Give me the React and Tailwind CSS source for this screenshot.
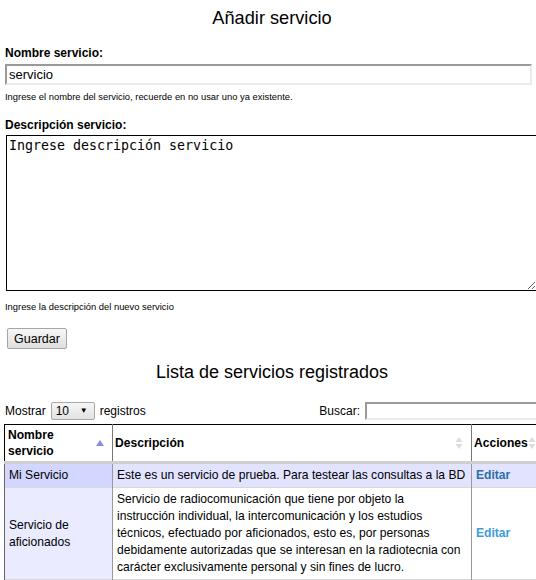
import React from "react"

const SortAsc = () => (
    <svg width="8" height="8" viewBox="0 0 8 8" className="shrink-0">
        <path d="M4 1 L8 7 L0 7 Z" fill="#8a8ae0" />
    </svg>
)

const SortBoth = () => (
    <svg width="8" height="14" viewBox="0 0 8 14" className="shrink-0">
        <path d="M4 1 L7.5 6 L0.5 6 Z" fill="#dcdcdc" />
        <path d="M4 13 L7.5 8 L0.5 8 Z" fill="#dcdcdc" />
    </svg>
)

const rows = [
    {
        name: "Mi Servicio",
        desc: ["Este es un servicio de prueba. Para testear las consultas a la BD"],
    },
    {
        name: "Servicio de aficionados",
        desc: [
            "Servicio de radiocomunicación que tiene por objeto la",
            "instrucción individual, la intercomunicación y los estudios",
            "técnicos, efectuado por aficionados, esto es, por personas",
            "debidamente autorizadas que se interesan en la radiotecnia con",
            "carácter exclusivamente personal y sin fines de lucro.",
        ],
    },
]

export default function App() {
    return (
        <div className="w-[536px] h-[580px] overflow-hidden bg-white text-black font-['Liberation_Sans',Arial,sans-serif] text-[12px]">
            <div className="w-[560px] pl-[5px]">
                {/* Form */}
                <h2 className="w-[534px] text-center text-[18.2px] leading-[21px] pt-[8px]">Añadir servicio</h2>

                <label className="block font-bold text-[12px] leading-[14px] mt-[17px]">Nombre servicio:</label>
                <input
                    type="text"
                    defaultValue="servicio"
                    className="block mt-[4px] w-[527px] h-[21px] border-2 border-t-[#9a9a9a] border-l-[#9a9a9a] border-r-[#ebebeb] border-b-[#ebebeb] px-[2px] text-[13px] leading-[15px] outline-none"
                />
                <p className="text-[9.4px] leading-[11px] mt-[6px]">
                    Ingrese el nombre del servicio, recuerde en no usar uno ya existente.
                </p>

                <label className="block font-bold text-[12px] leading-[14px] mt-[16px]">Descripción servicio:</label>
                <textarea
                    defaultValue="Ingrese descripción servicio"
                    className="block mt-[3px] ml-[1px] w-[531px] h-[156px] border border-black px-[2px] py-[2px] font-['DejaVu_Sans_Mono',monospace] text-[13.3px] leading-[15px] outline-none resize"
                />
                <p className="text-[9.4px] leading-[11px] mt-[10px]">Ingrese la descripción del nuevo servicio</p>

                <button className="block mt-[16px] ml-[2px] h-[21px] px-[6px] border border-[#a6a6a6] rounded-[2px] bg-gradient-to-b from-[#f7f7f7] to-[#dedede] text-[12.5px] leading-[14px]">
                    Guardar
                </button>

                {/* List */}
                <h2 className="w-[534px] text-center text-[18px] leading-[21px] mt-[13px]">Lista de servicios registrados</h2>

                <div className="flex items-center w-[531px] mt-[19px] h-[18px]">
                    <span>Mostrar</span>
                    <div className="ml-[5px] w-[44px] h-[18px] flex items-center justify-between border border-[#a8a8a8] rounded-[2px] bg-gradient-to-b from-[#f6f6f6] to-[#e2e2e2] pl-[4px] pr-[6px] text-[12px]">
                        <span>10</span>
                        <span className="text-[8px]">▼</span>
                    </div>
                    <span className="ml-[5px]">registros</span>
                    <span className="ml-auto mr-[5px]">Buscar:</span>
                    <div className="w-[186px] h-[18px] border-2 border-t-[#9a9a9a] border-l-[#9a9a9a] border-r-[#ebebeb] border-b-[#ebebeb] -mr-[15px]" />
                </div>

                <table className="table-fixed border-collapse w-[570px] -ml-[1px] mt-[4px] text-[12.1px]">
                    <colgroup>
                        <col className="w-[108px]" />
                        <col className="w-[359px]" />
                        <col className="w-[103px]" />
                    </colgroup>
                    <thead>
                        <tr className="border-t border-black">
                            <th className="border-l border-black border-b-[3px] border-b-[#cfcfcf] px-[3px] py-[2px] text-left align-middle">
                                <div className="flex items-center justify-between leading-[16px]">
                                    <span>Nombre<br />servicio</span>
                                    <span className="mr-[5px]"><SortAsc /></span>
                                </div>
                            </th>
                            <th className="border-l border-[#777] border-b-[3px] border-b-[#cfcfcf] px-[2px] py-[2px] text-left align-middle">
                                <div className="flex items-center justify-between leading-[16px]">
                                    <span>Descripción</span>
                                    <span className="mr-[6px]"><SortBoth /></span>
                                </div>
                            </th>
                            <th className="border-l border-[#777] border-b-[3px] border-b-[#cfcfcf] px-[2px] py-[2px] text-left align-middle">
                                <div className="flex items-center leading-[16px]">
                                    <span>Acciones</span>
                                    <SortBoth />
                                </div>
                            </th>
                        </tr>
                    </thead>
                    <tbody>
                        {rows.map((row, i) => {
                            const odd = i % 2 === 0
                            return (
                                <tr key={row.name} className={`border-b border-[#d8d8d8] ${odd ? "bg-[#e2e4ff]" : "bg-white"}`}>
                                    <td className={`border-l border-[#666] px-[4px] py-[3px] leading-[17px] align-middle ${odd ? "bg-[#d3d6ff]" : "bg-[#eaebff]"}`}>
                                        {row.name}
                                    </td>
                                    <td className="border-l border-[#999] pl-[4px] pr-[2px] py-[3px] leading-[17px] align-middle">
                                        {row.desc.map((line) => (
                                            <span key={line} className="block whitespace-nowrap">{line}</span>
                                        ))}
                                    </td>
                                    <td className="border-l border-[#999] px-[4px] py-[3px] leading-[17px] align-middle">
                                        <a className={`font-bold ${odd ? "text-[#2b6ea8]" : "text-[#3a9ddb]"}`}>Editar</a>
                                    </td>
                                </tr>
                            )
                        })}
                    </tbody>
                </table>
            </div>
        </div>
    )
}
